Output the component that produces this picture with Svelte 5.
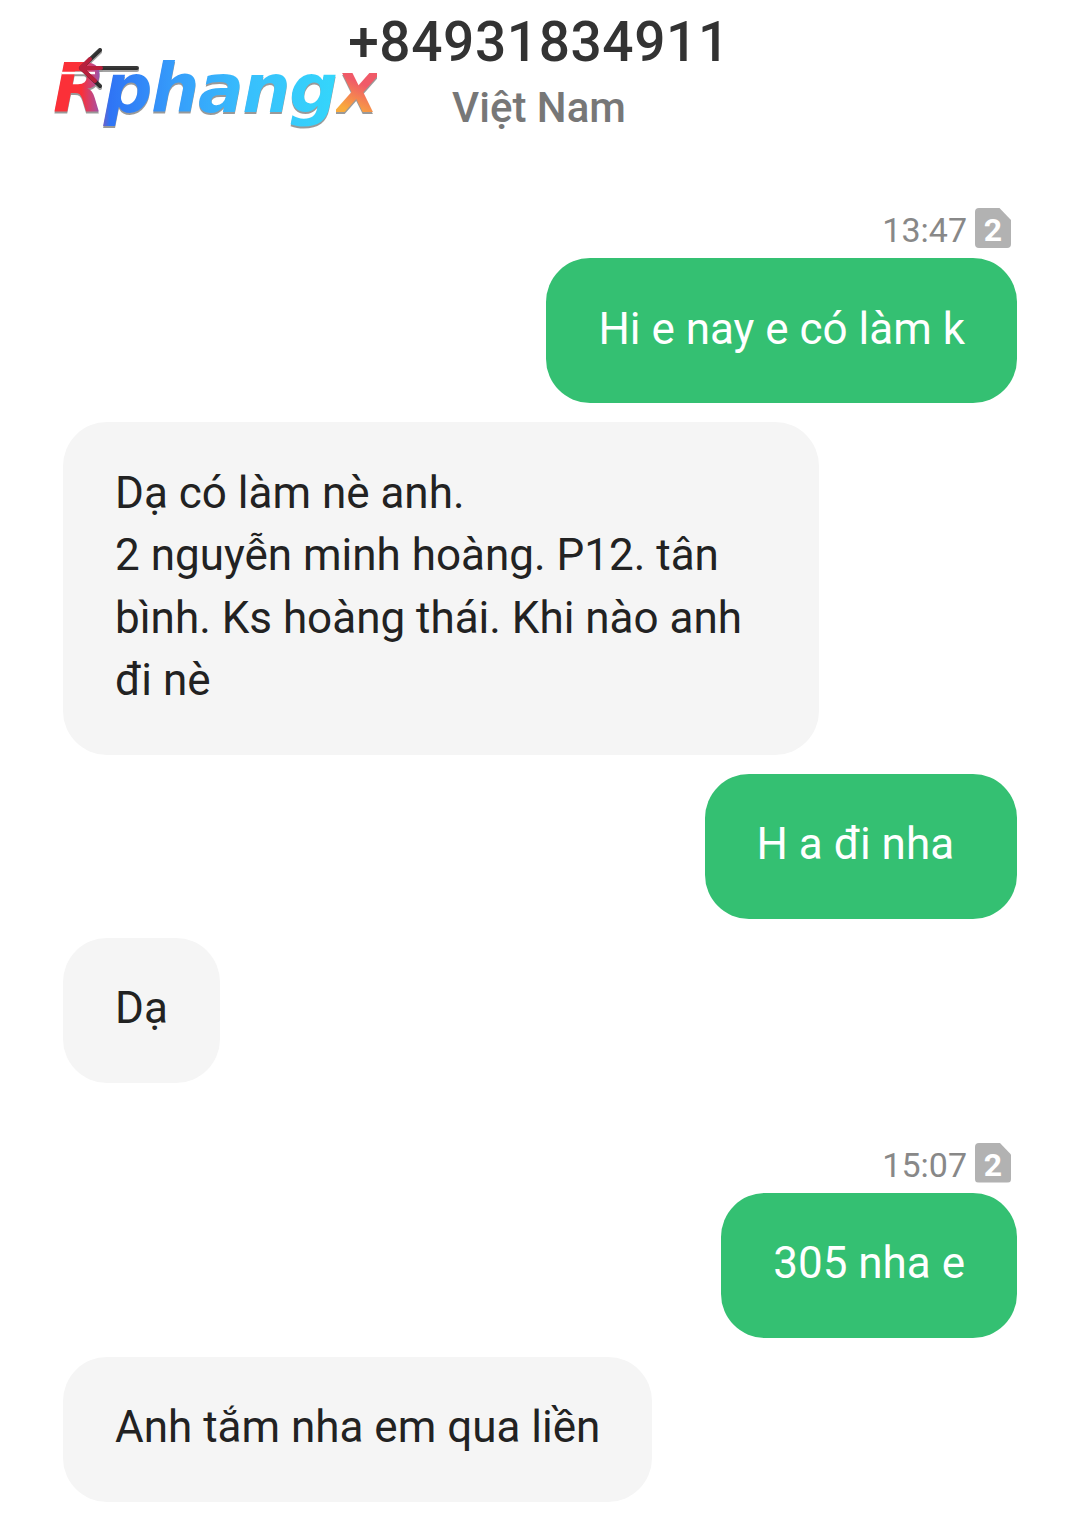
<script lang="ts">
  type Msg = { text: string; mine?: boolean; time?: string };
  const messages: Msg[] = [
    { text: "Hi e nay e có làm k", mine: true, time: "13:47" },
    { text: "Dạ có làm nè anh.\n2 nguyễn minh hoàng. P12. tân bình. Ks hoàng thái. Khi nào anh đi nè" },
    { text: "H a đi nha\u00a0", mine: true },
    { text: "Dạ" },
    { text: "305 nha e", mine: true, time: "15:07" },
    { text: "Anh tắm nha em qua liền" },
  ];
</script>

<div class="page">
  <header class="head">
    <div class="number">+84931834911</div>
    <div class="country">Việt Nam</div>
  </header>

  <div class="logo">
    <span class="rp">Rphang</span><span class="x">X</span>
    <svg class="arrow" width="90" height="60" viewBox="0 0 90 60">
      <path d="M-9 27 L24 27" fill="none" stroke="#fff" stroke-width="2.5" />
      <path d="M29 4 L10 22 L29 40 M10 22 L66 22" fill="none" stroke="#222" stroke-width="4" stroke-linecap="round" stroke-linejoin="round" opacity="0.9" />
      <path d="M19 13 L10 22 L24 35 M10 22 L30 22" fill="none" stroke="#b81f3c" stroke-width="4" stroke-linecap="round" stroke-linejoin="round" />
    </svg>
  </div>

  <main class="thread">
    {#each messages as m}
      {#if m.time}
        <div class="stamp">
          <span class="time">{m.time}</span>
          <span class="sim">2</span>
        </div>
      {/if}
      <div class="bubble" class:mine={m.mine}>{m.text}</div>
    {/each}
  </main>
</div>

<style>
  :global(body) {
    margin: 0;
    background: #fff;
    font-family: Roboto, "Liberation Sans", sans-serif;
  }
  .page {
    position: relative;
    width: 1080px;
    height: 1530px;
    overflow: hidden;
    box-sizing: border-box;
    padding-top: 11px;
  }
  .head {
    display: flex;
    flex-direction: column;
    align-items: center;
    padding-right: 2px;
    height: 124px;
  }
  .number {
    font-size: 55px;
    font-weight: 500;
    line-height: 62px;
    letter-spacing: 0.6px;
    color: #333;
  }
  .country {
    font-size: 42px;
    font-weight: 500;
    line-height: 50px;
    margin-top: 10px;
    color: #777;
  }
  .logo {
    position: absolute;
    left: 53px;
    top: 47px;
    font-family: "DejaVu Sans", sans-serif;
    font-weight: 700;
    font-style: italic;
    font-size: 68px;
    line-height: 84px;
    letter-spacing: -1.5px;
    white-space: nowrap;
    filter: drop-shadow(0 2px 0 rgba(70, 70, 70, 0.55));
  }
  .rp {
    background: linear-gradient(90deg, #fb3038 0%, #fb3038 10%, #b84a90 15%, #2f74f5 20%, #36a0fb 45%, #38c0fc 70%, #34d6fb 100%);
    -webkit-background-clip: text;
    background-clip: text;
    color: transparent;
  }
  .x {
    background: linear-gradient(25deg, #f9ab3c 25%, #f05a68 65%);
    -webkit-background-clip: text;
    background-clip: text;
    color: transparent;
    font-size: 54px;
  }
  .arrow {
    position: absolute;
    left: 18px;
    top: -1px;
    overflow: visible;
  }
  .thread {
    display: flex;
    flex-direction: column;
    align-items: flex-start;
    gap: 19px;
    padding: 0 63px;
    margin-top: 73px;
  }
  .stamp {
    align-self: flex-end;
    display: flex;
    align-items: center;
    gap: 8px;
    margin-bottom: -9px;
    height: 40px;
    padding-right: 6px;
  }
  .bubble + .stamp {
    margin-top: 41px;
  }
  .time {
    font-size: 34px;
    line-height: 40px;
    padding-top: 4px;
    color: #888;
  }
  .sim {
    width: 36px;
    height: 40px;
    background: #b2b2b2;
    color: #fff;
    border-radius: 4px;
    clip-path: polygon(0 0, 68% 0, 100% 30%, 100% 100%, 0 100%);
    font-size: 32px;
    font-weight: 700;
    line-height: 44px;
    text-align: center;
  }
  .bubble {
    box-sizing: border-box;
    max-width: 756px;
    background: #f5f5f5;
    color: #222;
    font-size: 44px;
    line-height: 62.5px;
    padding: 39.5px 52px 43px;
    border-radius: 44px;
    white-space: pre-line;
  }
  .bubble.mine {
    align-self: flex-end;
    background: #34c072;
    color: #fff;
  }
</style>
